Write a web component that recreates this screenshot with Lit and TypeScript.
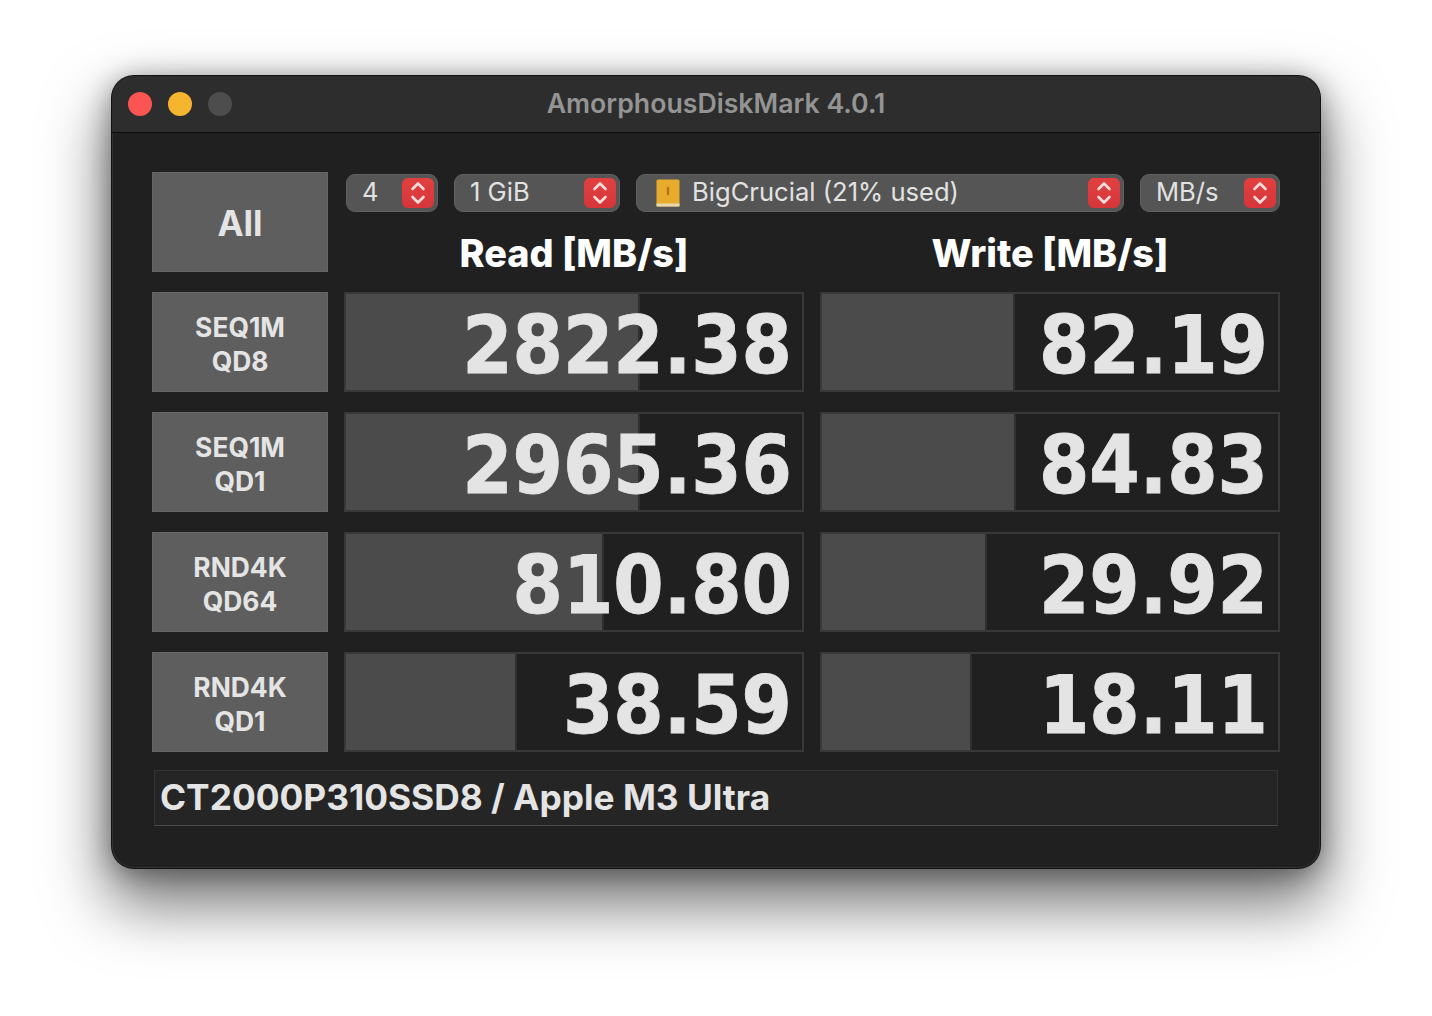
import { LitElement, html, css, svg } from "lit";
import { customElement } from "lit/decorators.js";

const chevrons = svg`<svg class="chev" viewBox="0 0 32 30" width="32" height="30" fill="none" stroke="#f8dcdc" stroke-width="2.6" stroke-linecap="round" stroke-linejoin="round"><path d="M10.5 11 16 5.5 21.5 11"/><path d="M10.5 19 16 24.5 21.5 19"/></svg>`;

const rows = [
  { a: "SEQ1M", b: "QD8", read: "2822.38", rw: 292, write: "82.19", ww: 191 },
  { a: "SEQ1M", b: "QD1", read: "2965.36", rw: 292, write: "84.83", ww: 192 },
  { a: "RND4K", b: "QD64", read: "810.80", rw: 256, write: "29.92", ww: 163 },
  { a: "RND4K", b: "QD1", read: "38.59", rw: 169, write: "18.11", ww: 148 },
];

@customElement("app-root")
export class AppRoot extends LitElement {
  static styles = css`
    :host { display: block; width: 1432px; height: 1016px; background: #fff; overflow: hidden; font-family: Inter, "Liberation Sans", sans-serif; color: #e6e6e6; }
    .stage { padding: 76px 112px 0; }
    .window { height: 792px; box-sizing: border-box; border-radius: 22px; background: #202020; box-shadow: inset 0 0 0 1px rgba(90,90,90,.35), 0 0 0 1px #111, 0 32px 62px 6px rgba(0,0,0,.52), 0 4px 28px rgba(0,0,0,.4); overflow: hidden; }
    .titlebar { height: 57px; box-sizing: border-box; background: #2d2d2d; border-bottom: 1px solid #0c0c0c; display: grid; grid-template-columns: 1fr auto 1fr; align-items: center; padding: 0 16px; }
    .lights { display: flex; gap: 16px; }
    .light { width: 24px; height: 24px; border-radius: 50%; }
    .red { background: #fb5552; } .yellow { background: #f6b52e; } .gray { background: #4d4d4d; }
    .title { font-size: 26.7px; font-weight: 600; color: #949494; margin-top: -2px; }
    .body { display: grid; grid-template-columns: 176px 460px 460px; column-gap: 16px; row-gap: 20px; grid-auto-rows: 100px; padding: 39px 40px 0; }
    .btn { background: #5e5e5e; border: 1px solid #666; box-sizing: border-box; display: flex; flex-direction: column; align-items: center; justify-content: center; font-weight: 700; color: #e4e4e4; font-size: 26.4px; line-height: 34px; padding-top: 3px; }
    .btn.all { font-size: 35px; padding-top: 2px; }
    .top { grid-column: 2 / 4; display: flex; flex-direction: column; }
    .selects { display: flex; gap: 16px; padding: 2px 0 0 2px; }
    .sel { height: 38px; box-sizing: border-box; border-radius: 9px; background: #555; border: 1px solid #616161; display: flex; align-items: center; padding: 0 3px 0 15px; font-size: 25.6px; font-weight: 400; color: #e2e2e2; }
    .sel .t { flex: 1; display: flex; align-items: center; gap: 8px; white-space: nowrap; margin-top: -4px; }
    .step { width: 32px; height: 30px; border-radius: 6px; background: linear-gradient(#e2403f, #d5363b); display: flex; flex: none; }
    .s1 { width: 92px; } .s2 { width: 166px; } .s3 { width: 488px; } .s4 { width: 140px; }
    .s3 .t { gap: 12px; padding-left: 4px; }
    .s3 .drive { margin-top: 4px; }
    .heads { display: grid; grid-template-columns: 460px 460px; column-gap: 16px; margin-top: 18px; }
    .heads div { text-align: center; font-size: 37.8px; font-weight: 800; color: #fff; line-height: 46px; }
    .cell { box-sizing: border-box; border: 2px solid #383838; display: flex; align-items: center; justify-content: flex-end; padding: 0 10px 0 0; font-family: "DejaVu Sans", sans-serif; font-stretch: condensed; font-weight: 700; font-size: 80.5px; -webkit-text-stroke: 0.8px #e4e4e4; color: #e4e4e4; line-height: 96px; background-image: linear-gradient(90deg, #4b4b4b var(--w), #2f2f2f var(--w), #2f2f2f calc(var(--w) + 2px), transparent calc(var(--w) + 2px)); }
    .cell span { margin-top: 6px; }
    .foot { grid-column: 1 / 4; margin: -2px 2px 0; height: 56px; box-sizing: border-box; background: #252525; border: 1px solid #333; border-bottom-color: #4a4a4a; display: flex; align-items: center; padding-left: 5px; padding-bottom: 1px; font-size: 35.3px; font-weight: 700; color: #e4e4e4; white-space: nowrap; }
    .drive { flex: none; }
  `;

  render() {
    return html`<div class="stage"><div class="window">
      <div class="titlebar">
        <div class="lights"><div class="light red"></div><div class="light yellow"></div><div class="light gray"></div></div>
        <div class="title">AmorphousDiskMark 4.0.1</div>
        <div></div>
      </div>
      <div class="body">
        <div class="btn all">All</div>
        <div class="top">
          <div class="selects">
            <div class="sel s1"><div class="t">4</div><div class="step">${chevrons}</div></div>
            <div class="sel s2"><div class="t">1 GiB</div><div class="step">${chevrons}</div></div>
            <div class="sel s3"><div class="t">
              <svg class="drive" width="24" height="28" viewBox="0 0 24 28"><rect x="0.5" y="0.5" width="23" height="27" rx="1.5" fill="#e8ac2c"/><rect x="0.5" y="24.5" width="23" height="3" fill="#e6d9b0"/><path d="M12 9v6" stroke="#b9701c" stroke-width="2.4" stroke-linecap="round"/></svg>
              BigCrucial (21% used)</div><div class="step">${chevrons}</div></div>
            <div class="sel s4"><div class="t">MB/s</div><div class="step">${chevrons}</div></div>
          </div>
          <div class="heads"><div>Read [MB/s]</div><div>Write [MB/s]</div></div>
        </div>
        ${rows.map(r => html`
          <div class="btn"><div>${r.a}</div><div>${r.b}</div></div>
          <div class="cell" style="--w:${r.rw}px"><span>${r.read}</span></div>
          <div class="cell" style="--w:${r.ww}px"><span>${r.write}</span></div>
        `)}
        <div class="foot">CT2000P310SSD8 / Apple M3 Ultra</div>
      </div>
    </div></div>`;
  }
}
